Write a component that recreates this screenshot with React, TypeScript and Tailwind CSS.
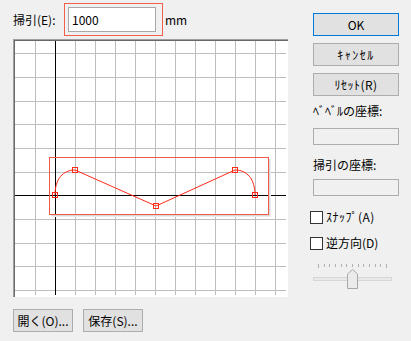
import React from "react";

const FONT = '"Noto Sans CJK JP", "Noto Sans", sans-serif';

const vLines = [20, 60, 80, 100, 120, 140, 160, 180, 200, 220, 240, 260];
const hLines = [12, 36, 60, 83, 107, 131, 178, 202, 225, 249];
const points: [number, number][] = [
  [40, 154],
  [60, 129],
  [141, 165],
  [220, 129],
  [240, 154],
];

function Button({ label, primary, className }: { label: string; primary?: boolean; className?: string }) {
  return (
    <button
      type="button"
      className={`h-[23px] flex items-center justify-center bg-[#e1e1e1] border text-[12px] text-black leading-none ${
        primary ? "border-[#0078d7]" : "border-[#adadad]"
      } ${className ?? ""}`}
    >
      {label}
    </button>
  );
}

function Checkbox({ label, className }: { label: string; className?: string }) {
  return (
    <label className={`flex items-center h-[16px] -ml-[3px] gap-[3px] text-[12px] text-black ${className ?? ""}`}>
      <span className="w-[13px] h-[13px] border border-[#333333] bg-white" />
      <span className="leading-none">{label}</span>
    </label>
  );
}

function Canvas() {
  return (
    <div className="w-[275px] h-[258px] border-t border-l border-[#a0a0a0] border-r-white border-b-white">
      <div className="w-full h-full border-t border-l border-[#696969] border-r-[#e3e3e3] border-b-[#e3e3e3] bg-white">
        <svg width="271" height="254" viewBox="0 0 271 254" className="block">
          <g stroke="#bdbdbd" strokeWidth="1" shapeRendering="crispEdges">
            {vLines.map((x) => (
              <line key={"v" + x} x1={x + 0.5} y1={0} x2={x + 0.5} y2={254} />
            ))}
            {hLines.map((y) => (
              <line key={"h" + y} x1={0} y1={y + 0.5} x2={271} y2={y + 0.5} />
            ))}
          </g>
          <g stroke="#000" strokeWidth="1" shapeRendering="crispEdges">
            <line x1={40.5} y1={0} x2={40.5} y2={254} />
            <line x1={0} y1={154.5} x2={271} y2={154.5} />
          </g>
          {/* selection frame with shadow */}
          <g fill="none" shapeRendering="crispEdges">
            <polyline points="36,174.5 254.5,174.5 254.5,118" stroke="#d8d8d8" />
            <polyline points="37,175.5 255.5,175.5 255.5,119" stroke="#ececec" />
            <rect x={34.5} y={116.5} width={219} height={57} stroke="#f25a48" />
          </g>
          <path
            d="M40 154 C40 138 48 129 60 129 L141 165 L220 129 C232 129 240 138 240 154"
            fill="none"
            stroke="#ff2a1a"
            strokeWidth="1"
          />
          <g fill="none" stroke="#ff2a1a" shapeRendering="crispEdges">
            {points.map(([x, y], i) => (
              <rect key={i} x={x - 2.5} y={y - 2.5} width={5} height={5} />
            ))}
          </g>
        </svg>
      </div>
    </div>
  );
}

function Slider() {
  const ticks = Array.from({ length: 13 }, (_, i) => i);
  return (
    <div className="relative w-[79px] h-[25px] mt-[13px]">
      <div className="flex justify-between items-start ml-[5px] w-[69px] h-[4px]">
        {ticks.map((i) => (
          <span
            key={i}
            className={`w-px bg-[#b0b0b0] ${i === 0 || i === 12 ? "h-[4px]" : "h-[3px]"}`}
          />
        ))}
      </div>
      <div className="mt-[9px] h-[4px] w-[79px] bg-[#e7eae8] border border-[#d6d6d6]" />
      <svg width="12" height="20" viewBox="0 0 12 20" className="absolute left-[34px] top-[5px]">
        <path d="M0.5 19.5 L0.5 5 L5.5 0.5 L10.5 5 L10.5 19.5 Z" fill="#ebebeb" stroke="#a8a8a8" />
      </svg>
    </div>
  );
}

export default function App() {
  return (
    <div
      className="w-[411px] h-[341px] bg-[#f0f0f0] flex text-black"
      style={{ fontFamily: FONT }}
    >
      <div className="pl-[13px] flex flex-col">
        <div className="flex items-center pt-[3px] h-[36px]">
          <span className="w-[51px] text-[12px] leading-none">掃引(E):</span>
          <div className="w-[99px] h-[33px] border border-[#f0604c] pt-[3px] pl-[3px]">
            <div className="w-[88px] h-[25px] border border-[#a8a8a8] bg-white flex items-center pl-[3px] text-[12px] leading-none">
              1000
            </div>
          </div>
          <span className="ml-[2px] text-[12px] leading-none">mm</span>
        </div>
        <div className="mt-[3px]">
          <Canvas />
        </div>
        <div className="flex gap-[10px] mt-[12px]">
          <Button label="開く(O)..." className="w-[60px]" />
          <Button label="保存(S)..." className="w-[60px]" />
        </div>
      </div>

      <div className="ml-[25px] w-[86px] pt-[13px] flex flex-col">
        <Button label="OK" primary className="w-[86px]" />
        <Button label="ｷｬﾝｾﾙ" className="w-[86px] mt-[7px] tracking-[1.5px]" />
        <Button label="ﾘｾｯﾄ(R)" className="w-[86px] mt-[7px] tracking-[0.5px]" />
        <span className="mt-[7px] h-[16px] flex items-center text-[12px] leading-none">ﾍﾞﾍﾞﾙの座標:</span>
        <div className="mt-[9px] h-[17px] w-[86px] border border-[#adadad] bg-[#f0f0f0]" />
        <span className="mt-[12px] h-[16px] flex items-center text-[12px] leading-none">掃引の座標:</span>
        <div className="mt-[6px] h-[17px] w-[86px] border border-[#adadad] bg-[#f0f0f0]" />
        <Checkbox label="ｽﾅｯﾌﾟ(A)" className="mt-[13px] tracking-[0.5px]" />
        <Checkbox label="逆方向(D)" className="mt-[10px]" />
        <Slider />
      </div>
    </div>
  );
}
